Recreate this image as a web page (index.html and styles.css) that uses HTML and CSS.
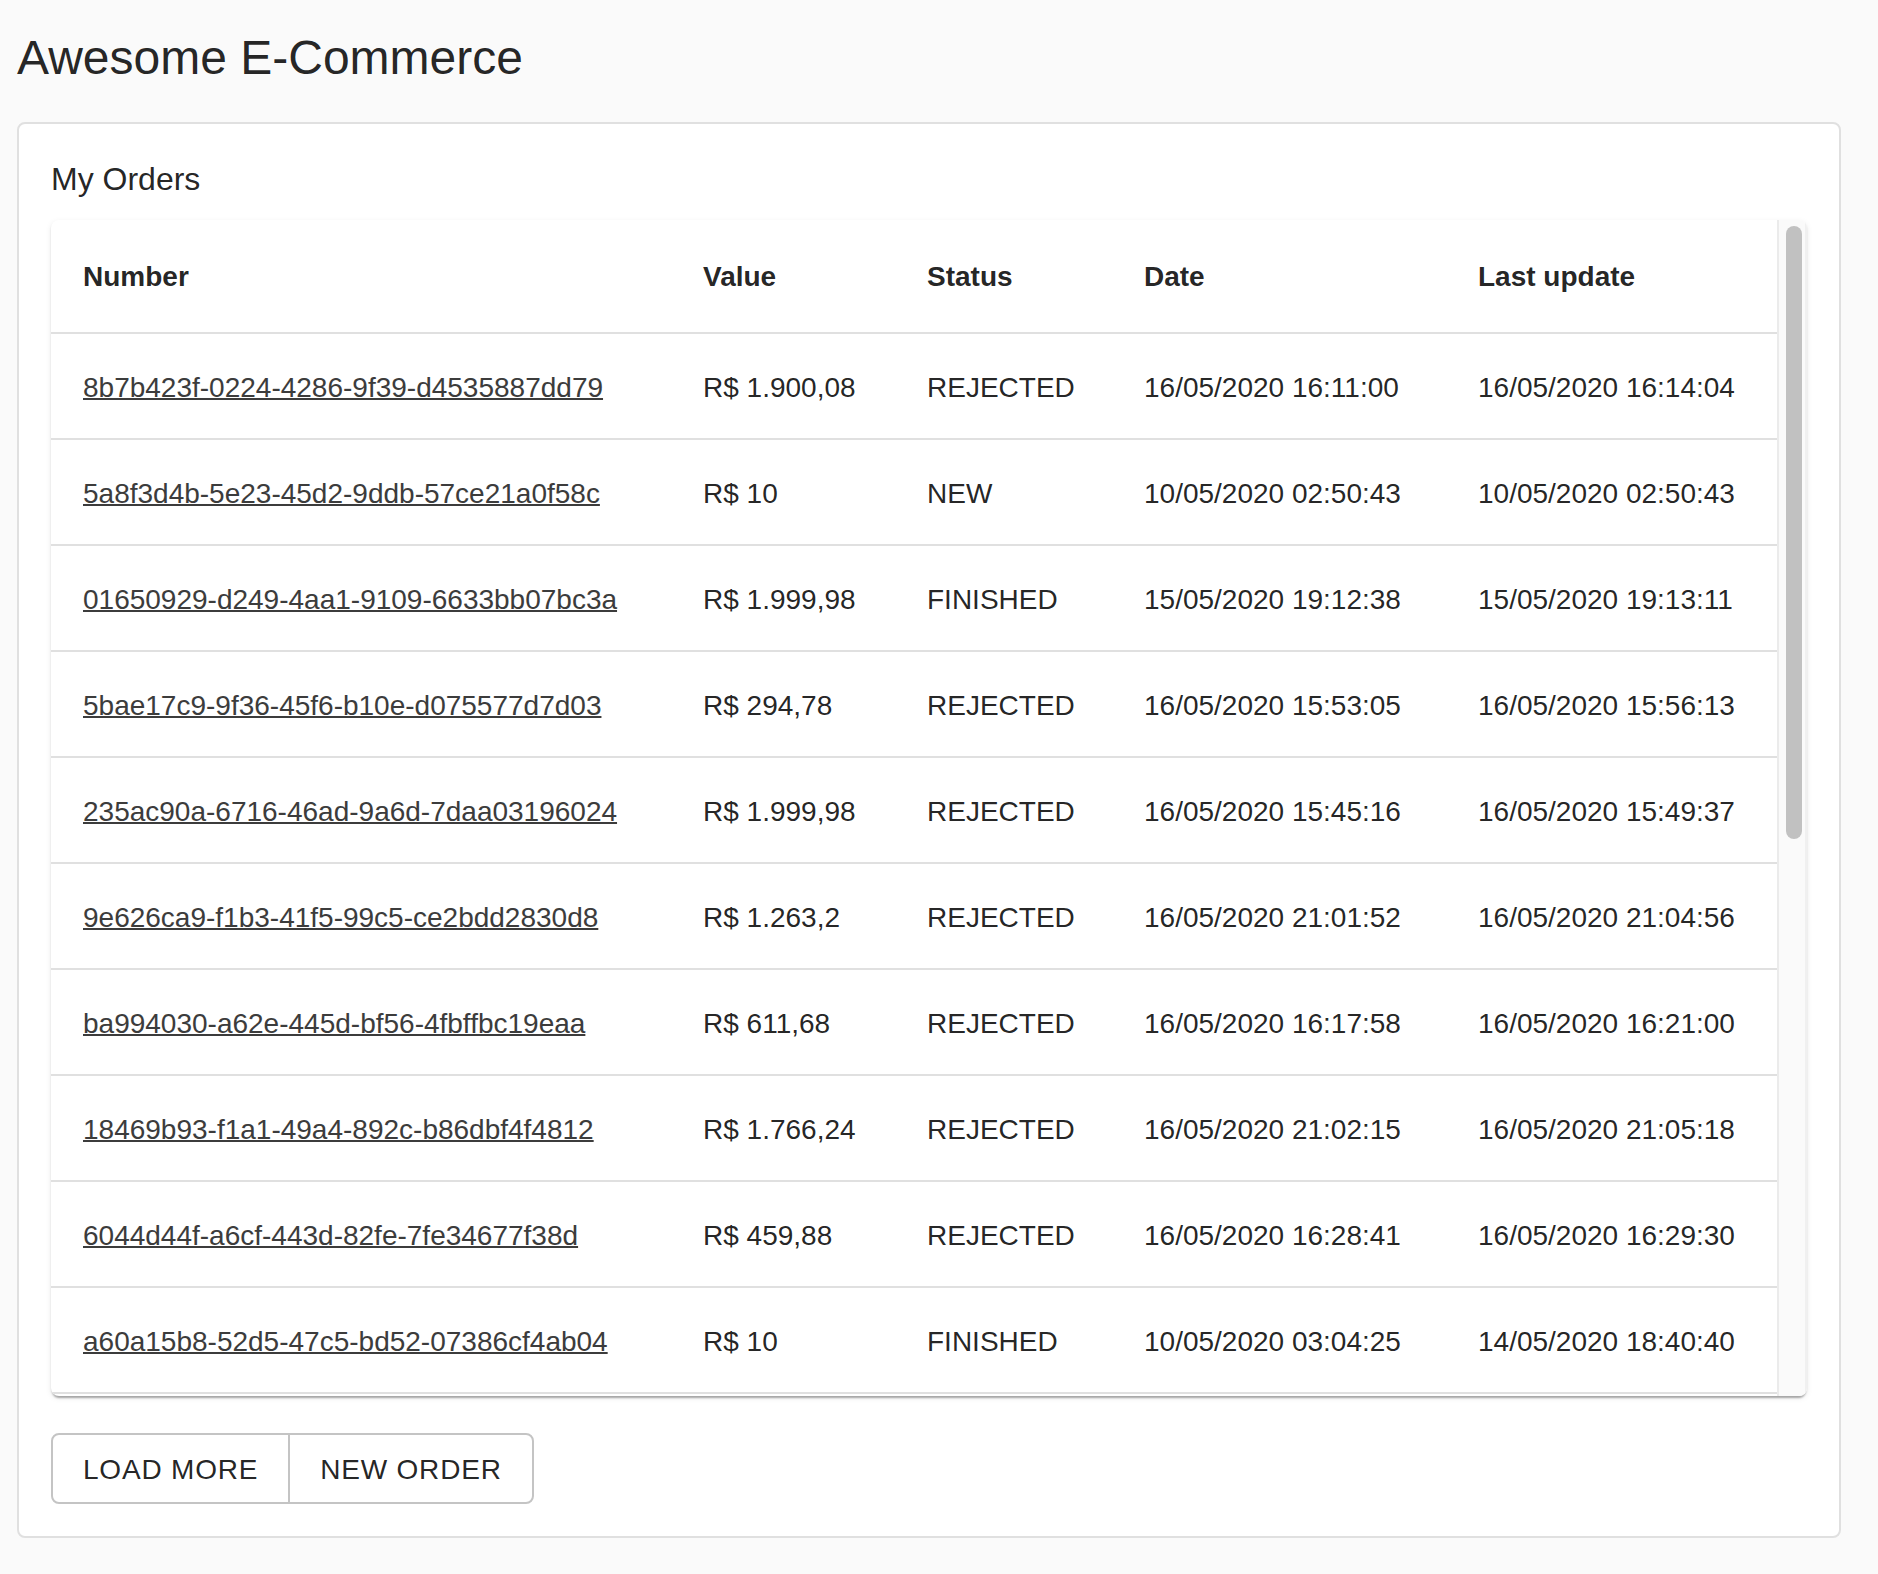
FILE: index.html
```html
<!DOCTYPE html>
<html lang="en">
<head>
<meta charset="utf-8">
<title>Awesome E-Commerce</title>
<link rel="stylesheet" href="styles.css">
</head>
<body>
<div class="page">
  <h1 class="title">Awesome E-Commerce</h1>
  <section class="card">
    <p class="card-title">My Orders</p>
    <div class="table-wrap">
      <div class="table-view">
        <table class="orders">
          <colgroup>
            <col class="c-number">
            <col class="c-value">
            <col class="c-status">
            <col class="c-date">
            <col class="c-update">
          </colgroup>
          <thead>
            <tr><th>Number</th><th>Value</th><th>Status</th><th>Date</th><th>Last update</th></tr>
          </thead>
          <tbody>
            <tr><td><a href="#">8b7b423f-0224-4286-9f39-d4535887dd79</a></td><td>R$ 1.900,08</td><td>REJECTED</td><td>16/05/2020 16:11:00</td><td>16/05/2020 16:14:04</td></tr>
            <tr><td><a href="#">5a8f3d4b-5e23-45d2-9ddb-57ce21a0f58c</a></td><td>R$ 10</td><td>NEW</td><td>10/05/2020 02:50:43</td><td>10/05/2020 02:50:43</td></tr>
            <tr><td><a href="#">01650929-d249-4aa1-9109-6633bb07bc3a</a></td><td>R$ 1.999,98</td><td>FINISHED</td><td>15/05/2020 19:12:38</td><td>15/05/2020 19:13:11</td></tr>
            <tr><td><a href="#">5bae17c9-9f36-45f6-b10e-d075577d7d03</a></td><td>R$ 294,78</td><td>REJECTED</td><td>16/05/2020 15:53:05</td><td>16/05/2020 15:56:13</td></tr>
            <tr><td><a href="#">235ac90a-6716-46ad-9a6d-7daa03196024</a></td><td>R$ 1.999,98</td><td>REJECTED</td><td>16/05/2020 15:45:16</td><td>16/05/2020 15:49:37</td></tr>
            <tr><td><a href="#">9e626ca9-f1b3-41f5-99c5-ce2bdd2830d8</a></td><td>R$ 1.263,2</td><td>REJECTED</td><td>16/05/2020 21:01:52</td><td>16/05/2020 21:04:56</td></tr>
            <tr><td><a href="#">ba994030-a62e-445d-bf56-4fbffbc19eaa</a></td><td>R$ 611,68</td><td>REJECTED</td><td>16/05/2020 16:17:58</td><td>16/05/2020 16:21:00</td></tr>
            <tr><td><a href="#">18469b93-f1a1-49a4-892c-b86dbf4f4812</a></td><td>R$ 1.766,24</td><td>REJECTED</td><td>16/05/2020 21:02:15</td><td>16/05/2020 21:05:18</td></tr>
            <tr><td><a href="#">6044d44f-a6cf-443d-82fe-7fe34677f38d</a></td><td>R$ 459,88</td><td>REJECTED</td><td>16/05/2020 16:28:41</td><td>16/05/2020 16:29:30</td></tr>
            <tr><td><a href="#">a60a15b8-52d5-47c5-bd52-07386cf4ab04</a></td><td>R$ 10</td><td>FINISHED</td><td>10/05/2020 03:04:25</td><td>14/05/2020 18:40:40</td></tr>
          </tbody>
        </table>
      </div>
      <div class="scroll-track" aria-hidden="true"><div class="scroll-thumb"></div></div>
    </div>
    <div class="btn-group">
      <button class="btn" type="button">LOAD MORE</button>
      <button class="btn" type="button">NEW ORDER</button>
    </div>
  </section>
</div>
</body>
</html>
```

FILE: styles.css
```css
html, body {
  margin: 0;
  padding: 0;
  background: #fafafa;
}

body {
  font-family: "Liberation Sans", Arial, Helvetica, sans-serif;
  color: rgba(0, 0, 0, 0.87);
}

.page {
  padding: 30px 37px 0 17px;
}

.title {
  margin: 0 0 36px 0;
  font-size: 48px;
  font-weight: 400;
  line-height: 56px;
}

.card {
  background: #ffffff;
  border: 2px solid #e0e0e0;
  border-radius: 8px;
  padding: 31px 32px 32px 32px;
}

.card-title {
  margin: 0 0 17px 0;
  font-size: 32px;
  line-height: 48px;
}

.table-wrap {
  display: flex;
  height: 1176px;
  background: #ffffff;
  border-radius: 8px;
  overflow: hidden;
  box-shadow: 0 4px 2px -2px rgba(0, 0, 0, 0.22), 0 2px 2px 0 rgba(0, 0, 0, 0.12), 0 2px 6px 0 rgba(0, 0, 0, 0.08);
}

.table-view {
  flex: 1;
  min-width: 0;
  overflow: hidden;
}

.scroll-track {
  box-sizing: border-box;
  width: 30px;
  flex: none;
  background: #fafafa;
  border-left: 2px solid #ebebeb;
  border-right: 2px solid #f0f0f0;
  padding: 6px 3px 0 7px;
}

.scroll-thumb {
  height: 613px;
  background: #c1c1c1;
  border-radius: 8px;
}

.orders {
  width: 100%;
  border-collapse: collapse;
  table-layout: fixed;
  font-size: 28px;
}

.c-number { width: 620px; }
.c-value { width: 224px; }
.c-status { width: 217px; }
.c-date { width: 334px; }
.c-update { width: 331px; }

.orders th,
.orders td {
  text-align: left;
  border-bottom: 2px solid #e0e0e0;
  white-space: nowrap;
  vertical-align: middle;
}

.orders th {
  padding: 33px 32px 31px 32px;
  font-weight: 700;
  line-height: 48px;
}

.orders td {
  padding: 34px 32px 30px 32px;
  font-weight: 400;
  line-height: 40px;
}

.orders a {
  color: #3c3c3c;
  text-decoration: underline;
  text-decoration-thickness: 2px;
}

.btn-group {
  display: inline-flex;
  margin-top: 37px;
}

.btn {
  font-family: "Liberation Sans", Arial, Helvetica, sans-serif;
  font-size: 28px;
  letter-spacing: 0.8px;
  line-height: 46px;
  color: rgba(0, 0, 0, 0.87);
  background: transparent;
  border: 2px solid #c4c4c4;
  padding: 12px 30px 9px 30px;
  margin: 0;
  cursor: pointer;
}

.btn:first-child {
  border-radius: 8px 0 0 8px;
}

.btn:last-child {
  border-radius: 0 8px 8px 0;
  margin-left: -2px;
}
```
